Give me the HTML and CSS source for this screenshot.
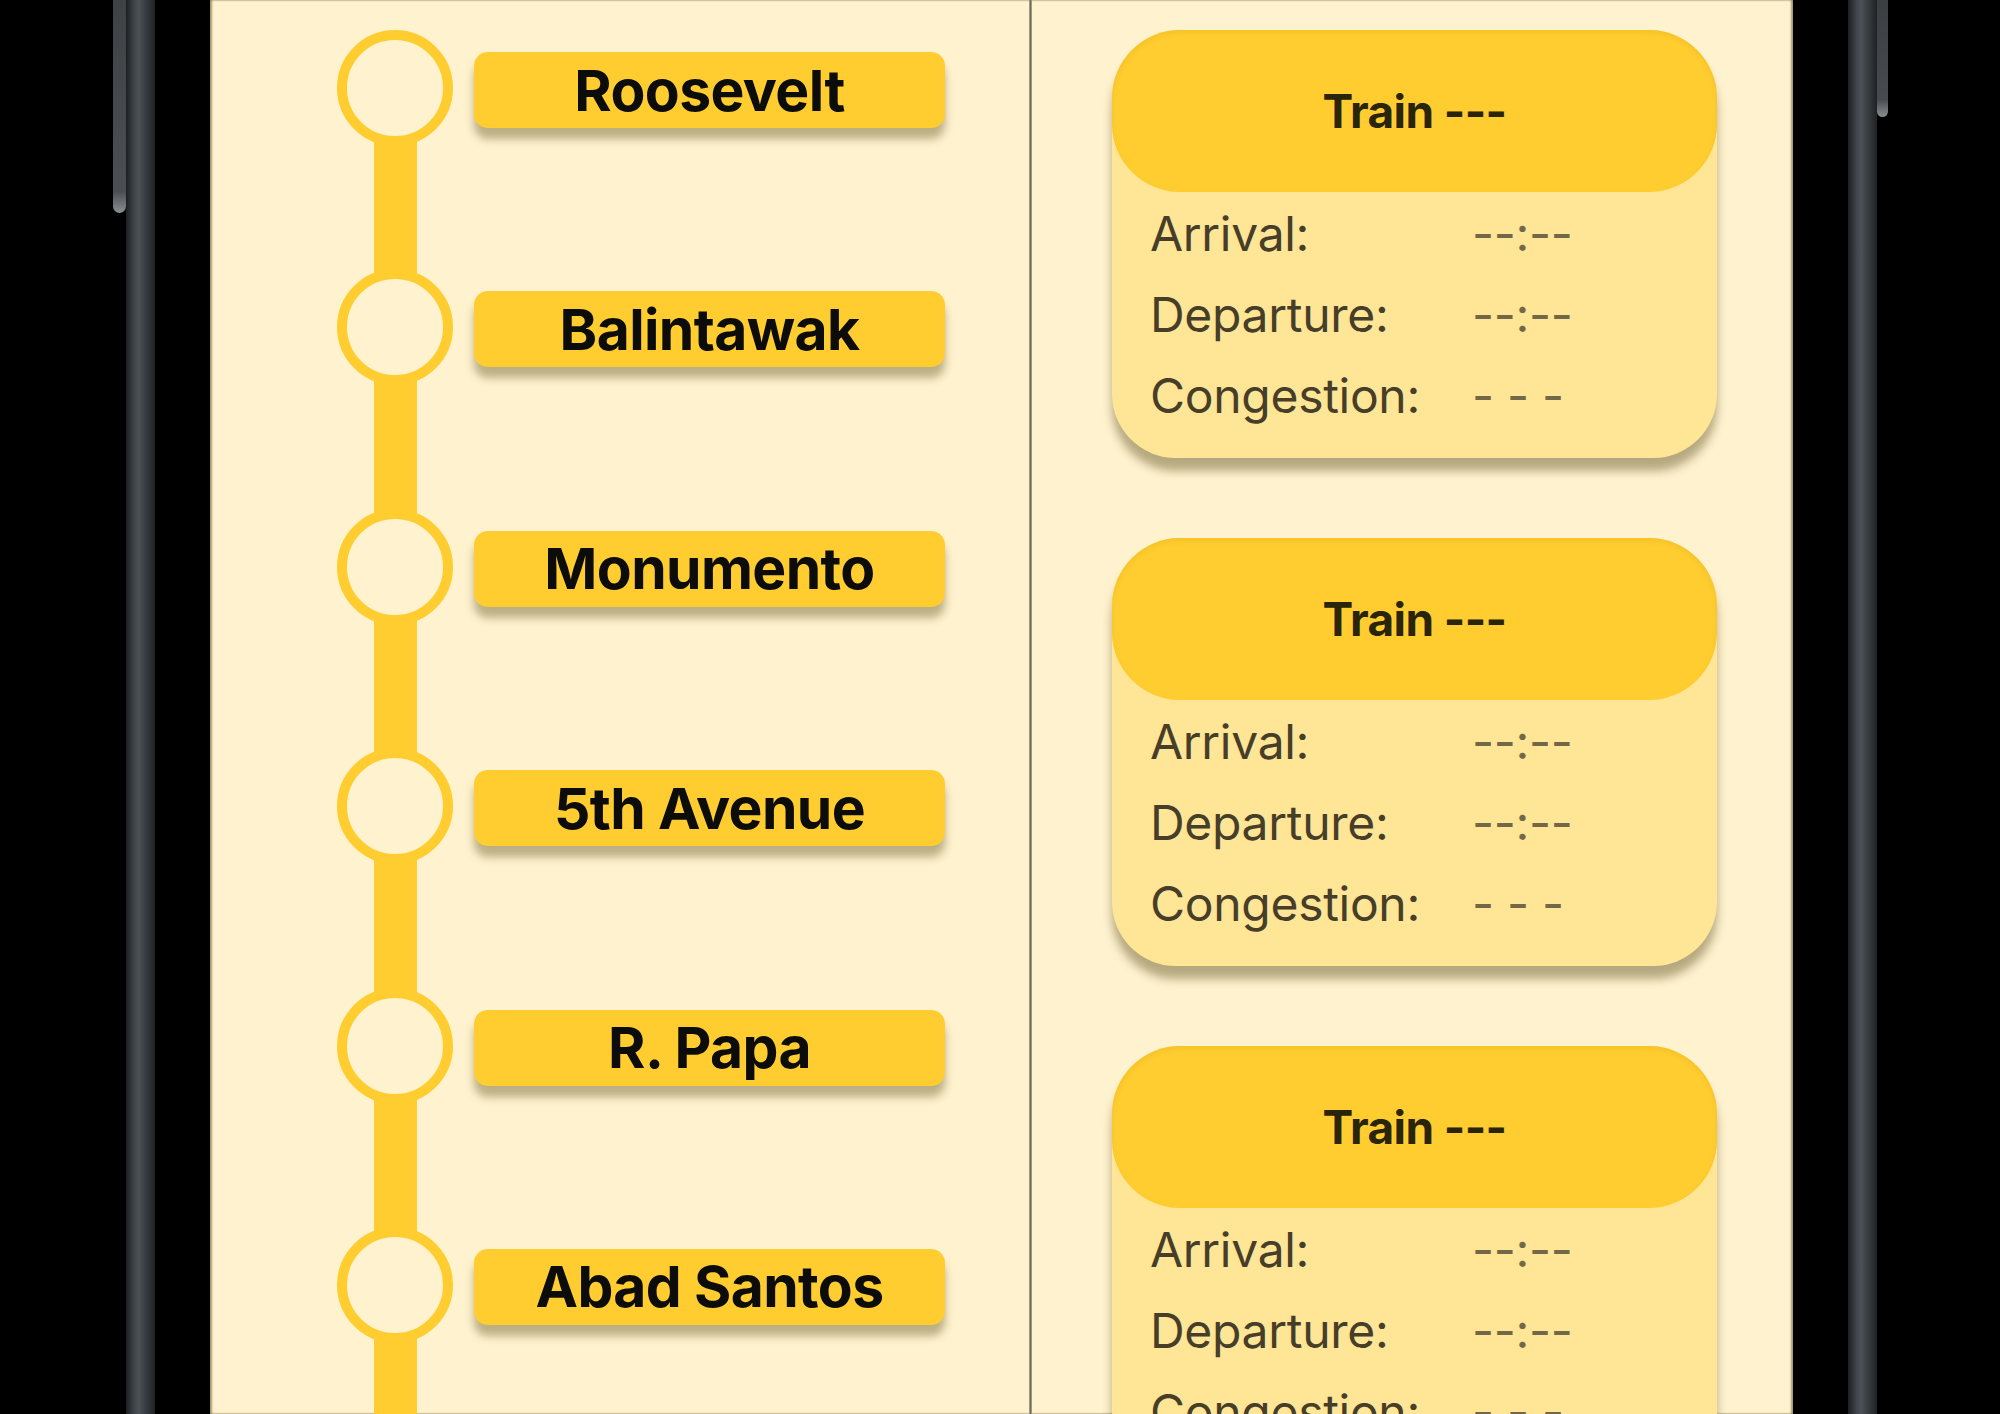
FILE: index.html
```html
<!DOCTYPE html>
<html lang="en">
<head>
<meta charset="utf-8">
<title>Train Line</title>
<link rel="stylesheet" href="styles.css">
</head>
<body>
<div class="device">
  <div class="side side-left">
    <div class="key"></div>
    <div class="rail"></div>
  </div>
  <main class="screen">
    <section class="stations">
      <div class="station">
        <div class="node"><span class="ring"></span><span class="track"></span></div>
        <div class="pill">Roosevelt</div>
      </div>
      <div class="station">
        <div class="node"><span class="ring"></span><span class="track"></span></div>
        <div class="pill">Balintawak</div>
      </div>
      <div class="station">
        <div class="node"><span class="ring"></span><span class="track"></span></div>
        <div class="pill">Monumento</div>
      </div>
      <div class="station">
        <div class="node"><span class="ring"></span><span class="track"></span></div>
        <div class="pill">5th Avenue</div>
      </div>
      <div class="station">
        <div class="node"><span class="ring"></span><span class="track"></span></div>
        <div class="pill">R. Papa</div>
      </div>
      <div class="station">
        <div class="node"><span class="ring"></span><span class="track"></span></div>
        <div class="pill">Abad Santos</div>
      </div>
    </section>
    <div class="divider"></div>
    <section class="trains">
      <article class="card">
        <header class="card-head">Train ---</header>
        <div class="card-body">
          <div class="row"><span class="label">Arrival:</span><span class="value">--:--</span></div>
          <div class="row"><span class="label">Departure:</span><span class="value">--:--</span></div>
          <div class="row"><span class="label">Congestion:</span><span class="value">- - -</span></div>
        </div>
      </article>
      <article class="card">
        <header class="card-head">Train ---</header>
        <div class="card-body">
          <div class="row"><span class="label">Arrival:</span><span class="value">--:--</span></div>
          <div class="row"><span class="label">Departure:</span><span class="value">--:--</span></div>
          <div class="row"><span class="label">Congestion:</span><span class="value">- - -</span></div>
        </div>
      </article>
      <article class="card">
        <header class="card-head">Train ---</header>
        <div class="card-body">
          <div class="row"><span class="label">Arrival:</span><span class="value">--:--</span></div>
          <div class="row"><span class="label">Departure:</span><span class="value">--:--</span></div>
          <div class="row"><span class="label">Congestion:</span><span class="value">- - -</span></div>
        </div>
      </article>
    </section>
  </main>
  <div class="side side-right">
    <div class="rail"></div>
    <div class="key"></div>
  </div>
</div>
</body>
</html>
```
FILE: styles.css
```css
html, body {
  margin: 0;
  padding: 0;
  background: #000;
  overflow: hidden;
}

.device {
  display: flex;
  width: 2000px;
  height: 1414px;
  padding-left: 113px;
  box-sizing: border-box;
  font-family: Inter, "Liberation Sans", sans-serif;
}

/* phone frame sides */
.side {
  display: flex;
  height: 100%;
}
.side-left { margin-right: 55px; }
.side-right { margin-left: 55px; }

.rail {
  width: 29px;
  height: 100%;
  background: linear-gradient(90deg, #1c1f22 0%, #40464b 30%, #4b5156 45%, #363b3f 70%, #1f2225 100%);
}
.side-left .key {
  width: 13px;
  height: 213px;
  border-radius: 0 0 7px 7px;
  background: linear-gradient(180deg, #3d4245 0%, #4a4f53 90%, #8a8f92 100%);
}
.side-right .key {
  width: 11px;
  height: 117px;
  border-radius: 0 0 6px 6px;
  background: linear-gradient(180deg, #3a3f42 0%, #464b4f 85%, #8a8f92 100%);
}

/* screen */
.screen {
  width: 1583px;
  height: 100%;
  flex-shrink: 0;
  display: grid;
  grid-template-columns: 819px 3px 1fr;
  background: #fff2cf;
  overflow: hidden;
  box-shadow: inset 2px 0 2px rgba(90, 80, 40, 0.55), inset -2px 0 2px rgba(90, 80, 40, 0.55);
}

/* stations timeline */
.stations {
  padding: 30px 0 0 127px;
}
.station {
  display: flex;
  align-items: flex-start;
  gap: 21px;
  height: 239.4px;
}
.node {
  width: 116px;
  height: 100%;
  display: flex;
  flex-direction: column;
  align-items: center;
  flex-shrink: 0;
}
.ring {
  position: relative;
  z-index: 1;
  width: 116px;
  height: 116px;
  box-sizing: border-box;
  border: 10px solid #ffcd30;
  border-radius: 50%;
  background: #fff2cf;
  flex-shrink: 0;
}
.track {
  flex: 1;
  width: 43px;
  margin: -8px 0;
  background: #ffcd30;
}
.station:last-child .track {
  flex: none;
  height: 200px;
}
.pill {
  margin-top: 22px;
  width: 471px;
  height: 76px;
  box-sizing: border-box;
  display: flex;
  align-items: center;
  justify-content: center;
  background: #ffcd30;
  border-radius: 14px;
  box-shadow: 0 11px 8px rgba(80, 65, 10, 0.38);
  font-weight: 700;
  font-size: 57px;
  letter-spacing: -0.6px;
  color: #0c0c0a;
}

/* divider */
.divider {
  background: linear-gradient(90deg, #b8b29a, #6f6a57 50%, #b8b29a);
}

/* train cards */
.trains {
  display: flex;
  flex-direction: column;
  gap: 80px;
  padding: 30px 0 0 80px;
}
.card {
  width: 605px;
  height: 428px;
  flex-shrink: 0;
  background: #ffe596;
  border-radius: 68px 68px 64px 64px;
  box-shadow: 0 13px 10px rgba(80, 68, 20, 0.42);
  display: flex;
  flex-direction: column;
}
.card-head {
  height: 162px;
  flex-shrink: 0;
  display: flex;
  align-items: center;
  justify-content: center;
  background: #ffcd30;
  border-radius: 68px;
  box-shadow: inset 0 3px 5px rgba(200, 150, 0, 0.18);
  font-weight: 700;
  font-size: 46px;
  letter-spacing: -0.6px;
  color: #2a2408;
}
.card-body {
  padding: 1px 0 0 38px;
}
.row {
  display: grid;
  grid-template-columns: 322px 1fr;
  height: 81px;
  line-height: 81px;
  font-size: 48px;
  letter-spacing: -0.3px;
}
.label {
  color: #463e28;
}
.value {
  color: #726848;
}
```
